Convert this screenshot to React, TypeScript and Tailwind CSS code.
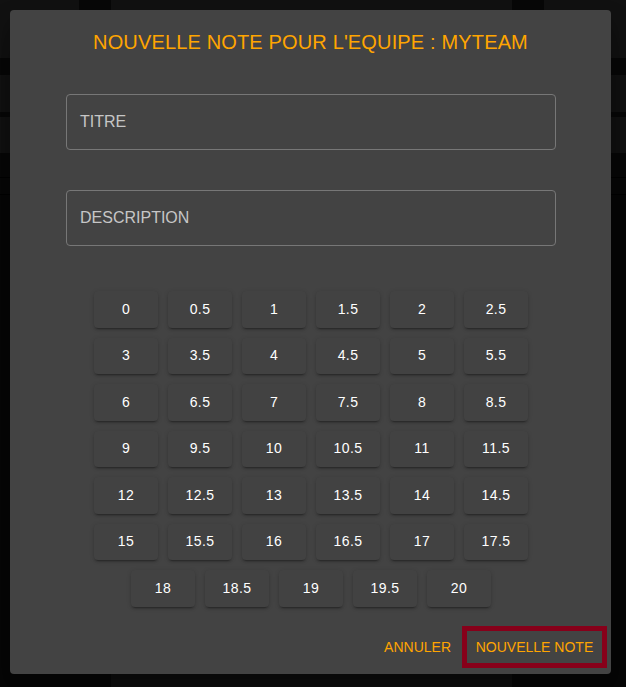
import React from "react";

const notes: string[] = [];
for (let i = 0; i <= 40; i++) notes.push(String(i / 2));

export default function App() {
  return (
    <div
      className="relative w-[626px] h-[687px] overflow-hidden bg-[#070707]"
      style={{ fontFamily: "'Liberation Sans', Arial, sans-serif" }}
    >
      {/* dimmed page behind the dialog */}
      <div className="flex flex-col h-full">
        <div className="flex h-[58px] bg-[#121212]">
          <div className="w-[79px]" />
          <div className="w-[32px] bg-[#080808]" />
          <div className="flex-1" />
          <div className="w-[32px] bg-[#080808]" />
          <div className="w-[82px]" />
        </div>
        <div className="h-[17px] bg-[#080808]" />
        <div className="h-[37px] bg-[#121212]" />
        <div className="h-[5px] bg-[#080808]" />
        <div className="h-[36px] bg-[#121212]" />
        <div className="h-[25px] bg-[#080808] border-b border-black" />
        <div className="h-[17px] bg-[#080808] border-b border-black" />
        <div className="flex-1" />
        <div className="flex h-[13px]">
          <div className="w-[111px]" />
          <div className="w-[401px] bg-[#0f0f0f]" />
          <div className="flex-1" />
        </div>
      </div>

      {/* dialog */}
      <div className="absolute left-[10px] top-[10px] w-[601px] h-[664px] rounded-[4px] bg-[#434343] shadow-[0_11px_15px_-7px_rgba(0,0,0,0.2),0_24px_38px_3px_rgba(0,0,0,0.14),0_9px_46px_8px_rgba(0,0,0,0.12)] flex flex-col">
        <div className="px-6 pt-4 pb-4 text-center text-[20px] leading-[32px] text-[#ffa500] tracking-[0.15px]">
          NOUVELLE NOTE POUR L'EQUIPE : MYTEAM
        </div>

        <div className="ml-[56px] mt-[20px] w-[490px] h-[56px] rounded-[4px] border border-[#777777] flex items-center pl-[13px] text-[16px] text-[#c6c6c6]">
          TITRE
        </div>
        <div className="ml-[56px] mt-[40px] w-[490px] h-[56px] rounded-[4px] border border-[#777777] flex items-center pl-[13px] text-[16px] text-[#c6c6c6]">
          DESCRIPTION
        </div>

        <div className="ml-[79px] mt-[40px] w-[444px] flex flex-wrap justify-center">
          {notes.map((n) => (
            <div
              key={n}
              className="m-[5px] w-16 h-[36.5px] rounded-[4px] bg-[#424242] shadow-[0_3px_1px_-2px_rgba(0,0,0,0.2),0_2px_2px_0_rgba(0,0,0,0.14),0_1px_5px_0_rgba(0,0,0,0.12)] flex items-center justify-center text-[14px] text-white tracking-[0.4px]"
            >
              {n}
            </div>
          ))}
        </div>

        <div className="mt-[14px] flex items-center justify-end pr-[4px]">
          <span className="mr-[11px] pt-[2px] text-[14px] text-[#ffa500]">ANNULER</span>
          <div className="w-[145px] h-[42px] border-[5px] border-[#87001a] flex items-center justify-center pt-[2px] text-[14px] text-[#ffa500]">
            NOUVELLE NOTE
          </div>
        </div>
      </div>
    </div>
  );
}
